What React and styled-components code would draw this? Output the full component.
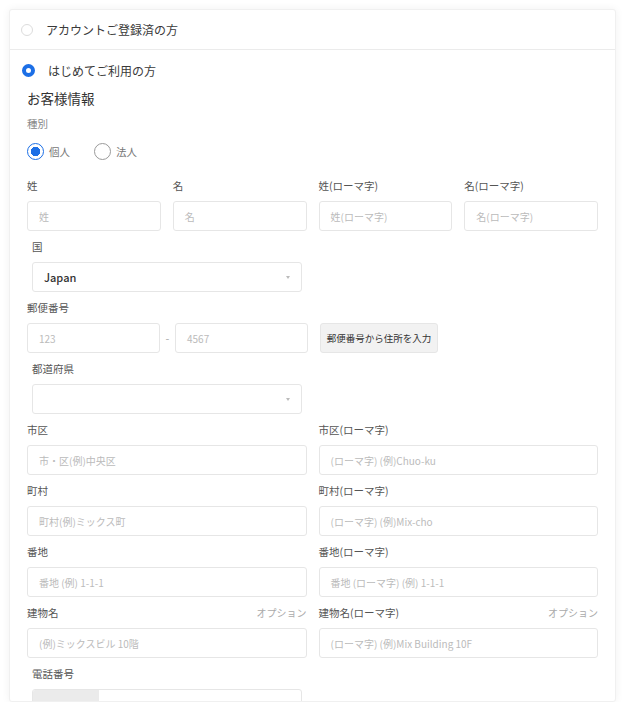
import React from 'react'
import styled, { createGlobalStyle, css } from 'styled-components'

const Global = createGlobalStyle`
  body {
    margin: 0;
    background: #fff;
    font-family: "Noto Sans CJK JP", "Noto Sans", sans-serif;
    color: #333;
  }
  * { box-sizing: border-box; }
`

const Page = styled.div`
  padding: 9px 11px 0 9px;
`

const Card = styled.div`
  width: 607px;
  height: 693px;
  overflow: hidden;
  background: #fff;
  border: 1px solid #f0f0f0;
  border-radius: 3px;
  box-shadow: 0 0 8px rgba(0, 0, 0, 0.06);
`

const HeadRow = styled.div`
  height: 40px;
  display: flex;
  align-items: center;
  gap: 13px;
  padding-left: ${(p) => p.$pad || 11}px;
  font-size: 12px;
  color: #3a3a3a;
  ${(p) =>
    p.$divider &&
    css`
      border-bottom: 1px solid #ebebeb;
    `}
`

const Dot = styled.span`
  flex: none;
  display: inline-block;
  border-radius: 50%;
  width: ${(p) => p.$size}px;
  height: ${(p) => p.$size}px;
  ${(p) =>
    p.$variant === 'thick'
      ? css`
          border: 4px solid #1c6fe6;
          background: #fff;
        `
      : p.$variant === 'on'
      ? css`
          border: 1px solid #1c6fe6;
          background: radial-gradient(circle, #1c6fe6 0 4.5px, #fff 5px);
        `
      : css`
          border: 1px solid ${p.$light ? '#dcdcdc' : '#9a9a9a'};
          background: #fff;
        `}
`

const Body = styled.div`
  padding: 0 17px 0 17px;
`

const Title = styled.div`
  font-size: 13.5px;
  font-weight: 400;
  line-height: 16px;
  color: #333;
`

const SubLabel = styled.div`
  margin-top: 10px;
  font-size: 10.5px;
  line-height: 16px;
  color: #888;
`

const Choices = styled.div`
  display: flex;
  align-items: center;
  height: 20px;
  margin-top: 9px;
  gap: 24px;
`

const Choice = styled.label`
  display: flex;
  align-items: center;
  gap: 5px;
  font-size: 10.5px;
  color: #777;
`

const Grid = styled.div`
  display: grid;
  grid-template-columns: repeat(${(p) => p.$cols}, 1fr);
  column-gap: 12px;
  margin-top: ${(p) => p.$top ?? 8}px;
`

const Field = styled.div`
  min-width: 0;
  ${(p) =>
    p.$inset &&
    css`
      margin: 0 5px;
    `}
`

const LabelRow = styled.div`
  display: flex;
  justify-content: space-between;
  font-size: 10.5px;
  line-height: 16px;
  margin-bottom: 7px;
  color: #555;
`

const Optional = styled.span`
  font-size: 10px;
  color: #aaa;
`

const Input = styled.div`
  height: 30px;
  border: 1px solid #e6e6e6;
  border-radius: 3px;
  display: flex;
  align-items: center;
  padding-left: 11px;
  font-size: 10px;
  color: #bbb;
  white-space: nowrap;
  overflow: hidden;
  width: ${(p) => (p.$w ? `${p.$w}px` : 'auto')};
  flex: ${(p) => (p.$w ? 'none' : '1')};
`

const Select = styled(Input)`
  padding-right: 11px;
  font-size: 11px;
  font-weight: 500;
  color: #333;
  &::after {
    content: '';
    margin-left: auto;
    border: 2px solid transparent;
    border-top: 3px solid #bbb;
    margin-top: 3px;
  }
`

const ZipRow = styled.div`
  display: flex;
  align-items: center;
`

const Dash = styled.span`
  width: 15px;
  text-align: center;
  font-size: 11px;
  color: #aaa;
`

const Button = styled.div`
  margin-left: 12px;
  height: 30px;
  width: 118px;
  display: flex;
  align-items: center;
  justify-content: center;
  background: #f2f2f2;
  border: 1px solid #e6e6e6;
  border-radius: 3px;
  font-size: 9.5px;
  color: #333;
`

const PhoneBox = styled.div`
  height: 30px;
  border: 1px solid #e6e6e6;
  border-radius: 3px;
  overflow: hidden;
  display: flex;
`

const DialCode = styled.div`
  width: 66px;
  background: #ebebeb;
`

const nameFields = [
  ['姓', '姓'],
  ['名', '名'],
  ['姓(ローマ字)', '姓(ローマ字)'],
  ['名(ローマ字)', '名(ローマ字)'],
]

const addressRows = [
  [
    { label: '市区', ph: '市・区(例)中央区' },
    { label: '市区(ローマ字)', ph: '(ローマ字) (例)Chuo-ku' },
  ],
  [
    { label: '町村', ph: '町村(例)ミックス町' },
    { label: '町村(ローマ字)', ph: '(ローマ字) (例)Mix-cho' },
  ],
  [
    { label: '番地', ph: '番地 (例) 1-1-1' },
    { label: '番地(ローマ字)', ph: '番地 (ローマ字) (例) 1-1-1' },
  ],
  [
    { label: '建物名', ph: '(例)ミックスビル 10階', opt: true },
    { label: '建物名(ローマ字)', ph: '(ローマ字) (例)Mix Building 10F', opt: true },
  ],
]

export default function App() {
  return (
    <Page>
      <Global />
      <Card>
        <HeadRow $divider>
          <Dot $size={12} $light />
          アカウントご登録済の方
        </HeadRow>
        <HeadRow $pad={12}>
          <Dot $size={13} $variant="thick" />
          はじめてご利用の方
        </HeadRow>
        <Body>
          <Title>お客様情報</Title>
          <SubLabel>種別</SubLabel>
          <Choices>
            <Choice>
              <Dot $size={17} $variant="on" />
              個人
            </Choice>
            <Choice>
              <Dot $size={17} />
              法人
            </Choice>
          </Choices>

          <Grid $cols={4} $top={17}>
            {nameFields.map(([label, ph]) => (
              <Field key={label}>
                <LabelRow>{label}</LabelRow>
                <Input>{ph}</Input>
              </Field>
            ))}
          </Grid>

          <Grid $cols={2}>
            <Field $inset>
              <LabelRow>国</LabelRow>
              <Select>Japan</Select>
            </Field>
          </Grid>

          <Grid $cols={1}>
            <Field>
              <LabelRow>郵便番号</LabelRow>
              <ZipRow>
                <Input $w={133}>123</Input>
                <Dash>-</Dash>
                <Input $w={133}>4567</Input>
                <Button>郵便番号から住所を入力</Button>
              </ZipRow>
            </Field>
          </Grid>

          <Grid $cols={2}>
            <Field $inset>
              <LabelRow>都道府県</LabelRow>
              <Select />
            </Field>
          </Grid>

          {addressRows.map((row, i) => (
            <Grid $cols={2} key={i}>
              {row.map((f) => (
                <Field key={f.label}>
                  <LabelRow>
                    {f.label}
                    {f.opt && <Optional>オプション</Optional>}
                  </LabelRow>
                  <Input>{f.ph}</Input>
                </Field>
              ))}
            </Grid>
          ))}

          <Grid $cols={2}>
            <Field $inset>
              <LabelRow>電話番号</LabelRow>
              <PhoneBox>
                <DialCode />
              </PhoneBox>
            </Field>
          </Grid>
        </Body>
      </Card>
    </Page>
  )
}
